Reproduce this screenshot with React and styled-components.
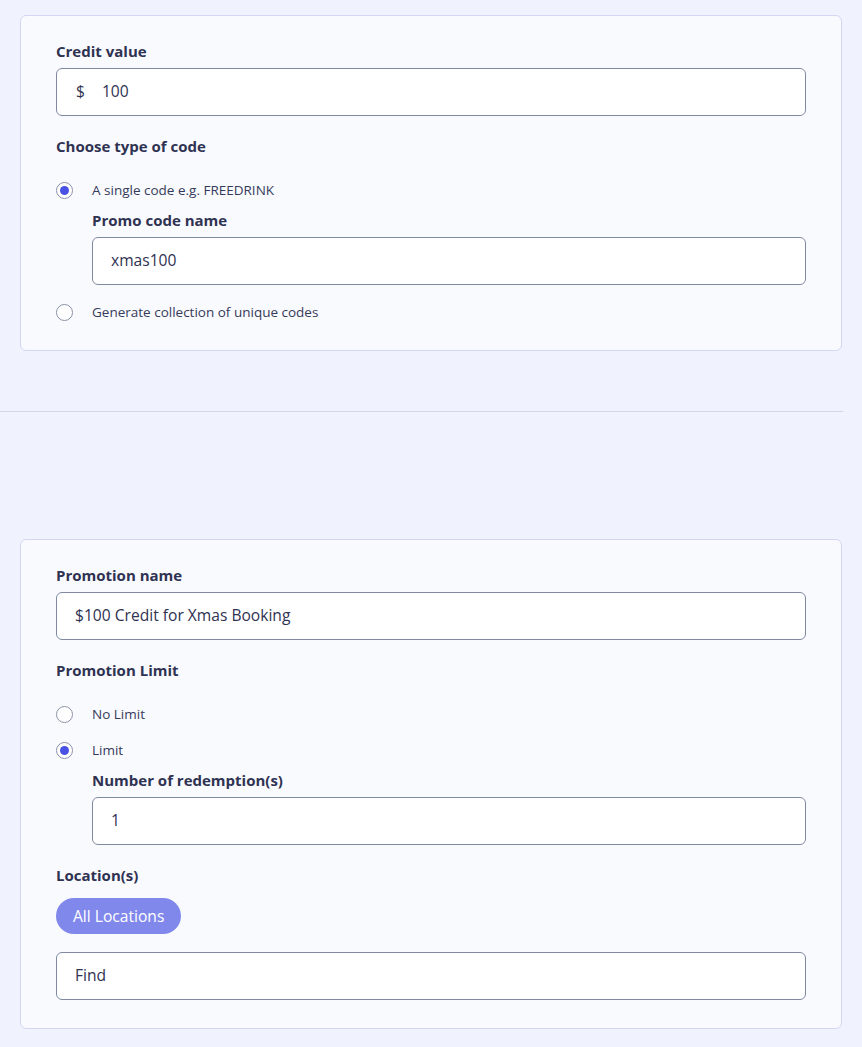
import React from "react";
import styled, { createGlobalStyle } from "styled-components";

const GlobalStyle = createGlobalStyle`
  html, body {
    margin: 0;
    padding: 0;
    background: #f0f3fe;
    font-family: "Open Sans", Lato, sans-serif;
    color: #2f3252;
  }
`;

const Page = styled.div`
  width: 843px;
  padding-top: 15px;
  padding-bottom: 18px;
`;

const Card = styled.section`
  margin-left: 20px;
  width: 822px;
  box-sizing: border-box;
  background: #f9fafe;
  border: 1px solid #d3d6f4;
  border-radius: 6px;
  padding: 25px 35px 28px 35px;
`;

const Divider = styled.hr`
  margin: 60px 0 127px 0;
  border: 0;
  border-top: 1px solid #d2d6e6;
  height: 0;
`;

const Label = styled.div`
  font-size: 15px;
  font-weight: 700;
  line-height: 20px;
  color: #2f3252;
  margin-top: ${(p) => p.$top || 0}px;
  margin-bottom: 7px;
`;

const Field = styled.div`
  height: 48px;
  box-sizing: border-box;
  background: #ffffff;
  border: 1px solid #7f8aa1;
  border-radius: 6px;
  display: flex;
  align-items: center;
  padding: 0 18px 2px 18px;
  font-size: 15.6px;
  color: #2f3252;
`;

const Prefix = styled.span`
  margin-left: 1px;
  margin-right: 17px;
`;

const RadioGroup = styled.div`
  display: flex;
  flex-direction: column;
  margin-top: 24px;
`;

const RadioRow = styled.label`
  display: flex;
  align-items: center;
  gap: 19px;
  height: 20px;
  font-size: 13.5px;
  color: #363a5a;
  margin-top: ${(p) => p.$top || 0}px;
`;

const RadioCircle = styled.span`
  width: 17px;
  height: 17px;
  box-sizing: border-box;
  border-radius: 50%;
  border: 1px solid #8a92a8;
  background: #ffffff;
  display: flex;
  align-items: center;
  justify-content: center;
  &::after {
    content: "";
    width: 9px;
    height: 9px;
    border-radius: 50%;
    background: ${(p) => (p.$checked ? "#4a52e4" : "transparent")};
  }
`;

const Nested = styled.div`
  margin-left: 36px;
  margin-top: 10px;
`;

const Pill = styled.button`
  display: block;
  margin-top: 13px;
  height: 36px;
  padding: 0 17px;
  border: 0;
  border-radius: 18px;
  background: #8188ec;
  color: #ffffff;
  font-family: inherit;
  font-size: 15.6px;
  cursor: pointer;
`;

const Spacer = styled.div`
  height: ${(p) => p.$h}px;
`;

const Radio = ({ checked, top, children }) => (
  <RadioRow $top={top}>
    <RadioCircle $checked={checked} />
    {children}
  </RadioRow>
);

export default function App() {
  return (
    <Page>
      <GlobalStyle />
      <Card>
        <Label>Credit value</Label>
        <Field>
          <Prefix>$</Prefix>100
        </Field>
        <Label $top={20}>Choose type of code</Label>
        <RadioGroup>
          <Radio checked>A single code e.g. FREEDRINK</Radio>
          <Nested>
            <Label>Promo code name</Label>
            <Field>xmas100</Field>
          </Nested>
          <Radio top={17}>Generate collection of unique codes</Radio>
        </RadioGroup>
      </Card>

      <Divider />

      <Card>
        <Label>Promotion name</Label>
        <Field>$100 Credit for Xmas Booking</Field>
        <Label $top={20}>Promotion Limit</Label>
        <RadioGroup>
          <Radio>No Limit</Radio>
          <Radio checked top={16}>
            Limit
          </Radio>
          <Nested>
            <Label>Number of redemption(s)</Label>
            <Field>1</Field>
          </Nested>
        </RadioGroup>
        <Label $top={20}>Location(s)</Label>
        <Pill>All Locations</Pill>
        <Spacer $h={18} />
        <Field>Find</Field>
      </Card>
    </Page>
  );
}
